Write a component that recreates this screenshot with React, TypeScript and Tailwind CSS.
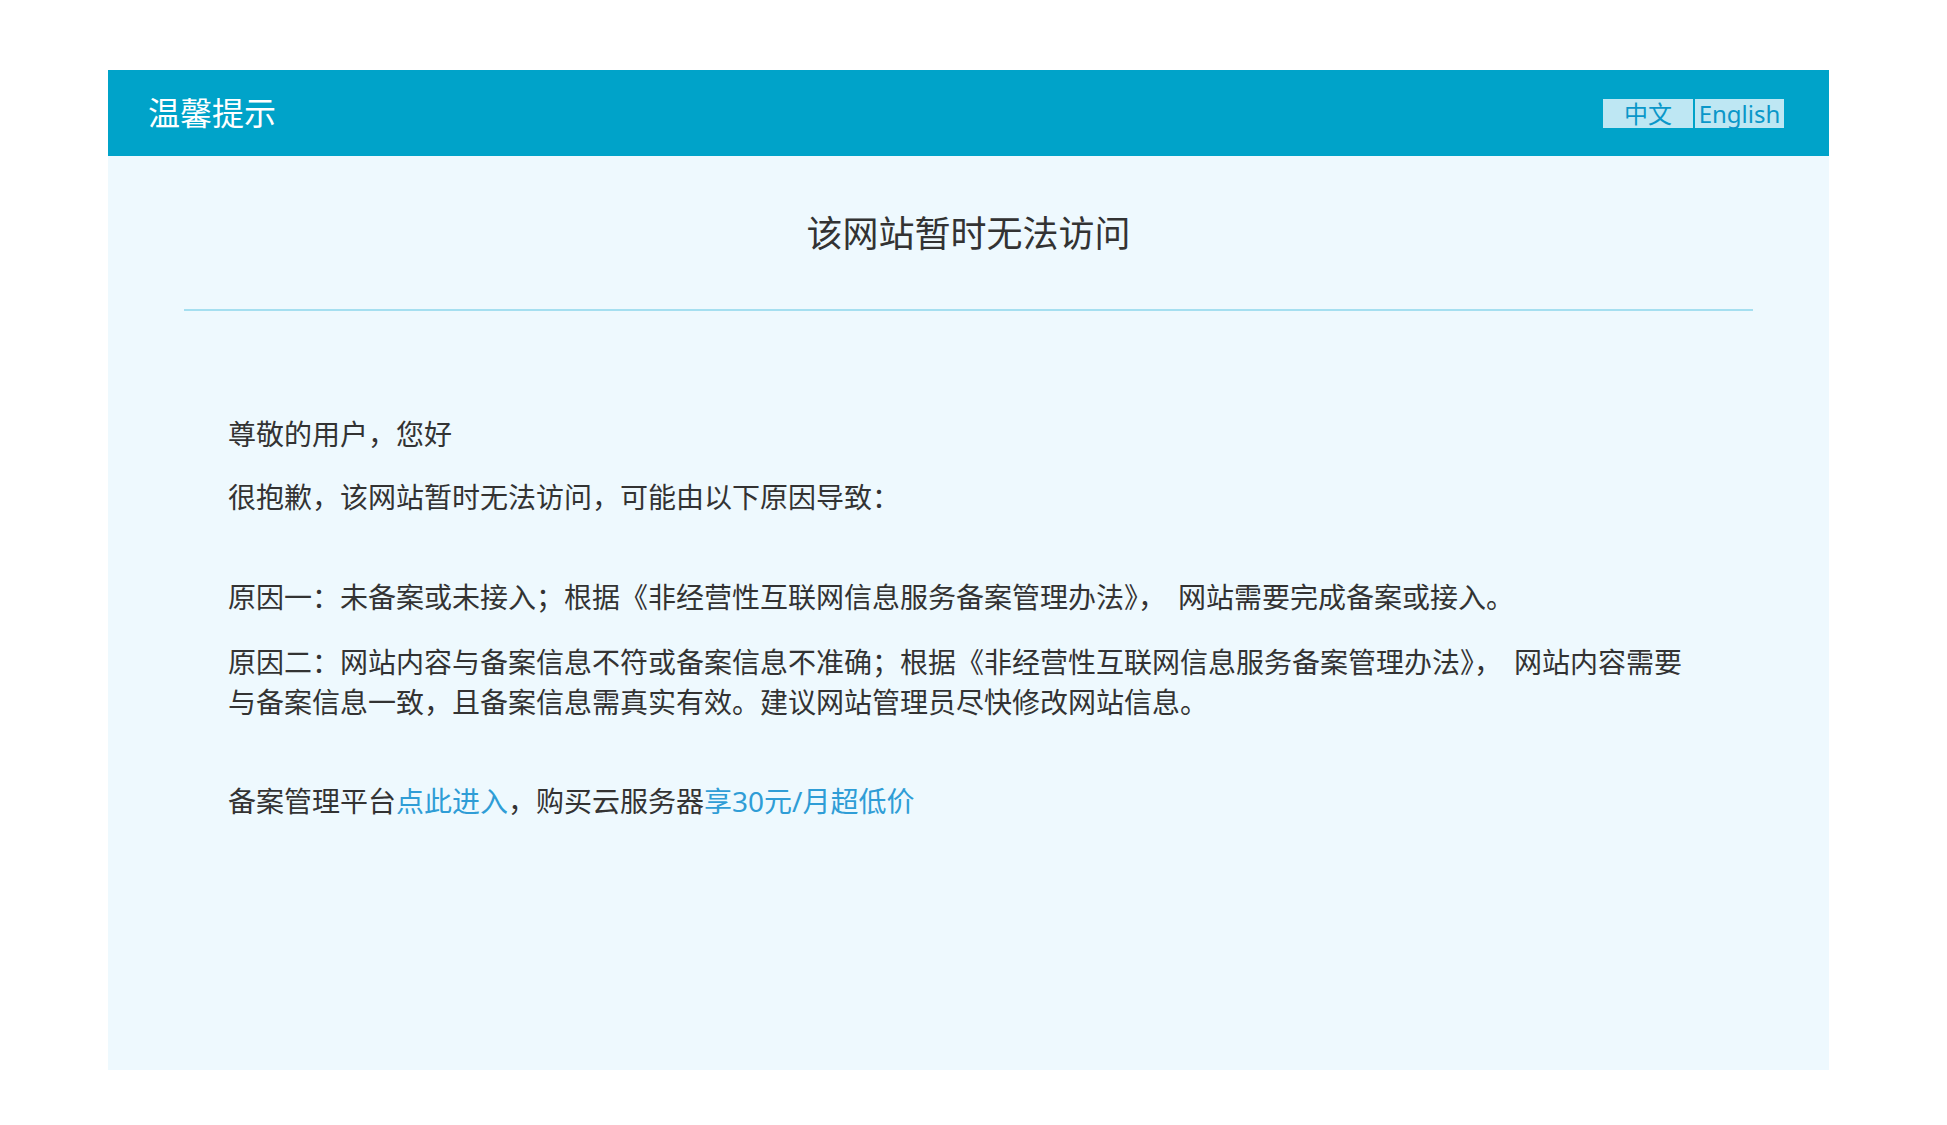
import React from "react";

const font = { fontFamily: '"Noto Sans", "Noto Sans CJK SC", sans-serif' };

export default function App() {
  return (
    <div className="min-h-[1125px] bg-white pt-[70px]" style={font}>
      <div className="ml-[108px] h-[1000px] w-[1721px] bg-[#eef9fe]">
        <div className="flex h-[86px] items-center justify-between bg-[#00a3c9] pl-[40px] pr-[45px]">
          <div className="text-[32px] leading-[40px] text-white">温馨提示</div>
          <div className="flex gap-[2px]">
            <div className="h-[29px] w-[90px] bg-[#bee7f3] text-center text-[24px] leading-[29px] text-[#0a97c9]">
              中文
            </div>
            <div className="h-[29px] w-[89px] bg-[#bee7f3] text-center text-[24px] leading-[29px] text-[#0a97c9]">
              English
            </div>
          </div>
        </div>
        <div className="mt-[51px] text-center text-[36px] leading-[54px] text-[#333]">
          该网站暂时无法访问
        </div>
        <div className="mx-[76px] mt-[48px] h-[2px] bg-[#a5dff0]" />
        <div className="mt-[103px] pl-[120px] text-[28px] leading-[40px] text-[#333]">
          <p>尊敬的用户，您好</p>
          <p className="mt-[23px]">很抱歉，该网站暂时无法访问，可能由以下原因导致：</p>
          <p className="mt-[60px] w-[1470px]">
            原因一：未备案或未接入；根据《非经营性互联网信息服务备案管理办法》，
            <span className="inline-block w-[12px]" />
            网站需要完成备案或接入。
          </p>
          <p className="mt-[25px] w-[1470px]">
            原因二：网站内容与备案信息不符或备案信息不准确；根据《非经营性互联网信息服务备案管理办法》，
            <span className="inline-block w-[12px]" />
            网站内容需要与备案信息一致，且备案信息需真实有效。建议网站管理员尽快修改网站信息。
          </p>
          <p className="mt-[59px]">
            备案管理平台<a className="text-[#2f9dd6]">点此进入</a>，购买云服务器
            <a className="text-[#2f9dd6]">享30元/月超低价</a>
          </p>
        </div>
      </div>
    </div>
  );
}
